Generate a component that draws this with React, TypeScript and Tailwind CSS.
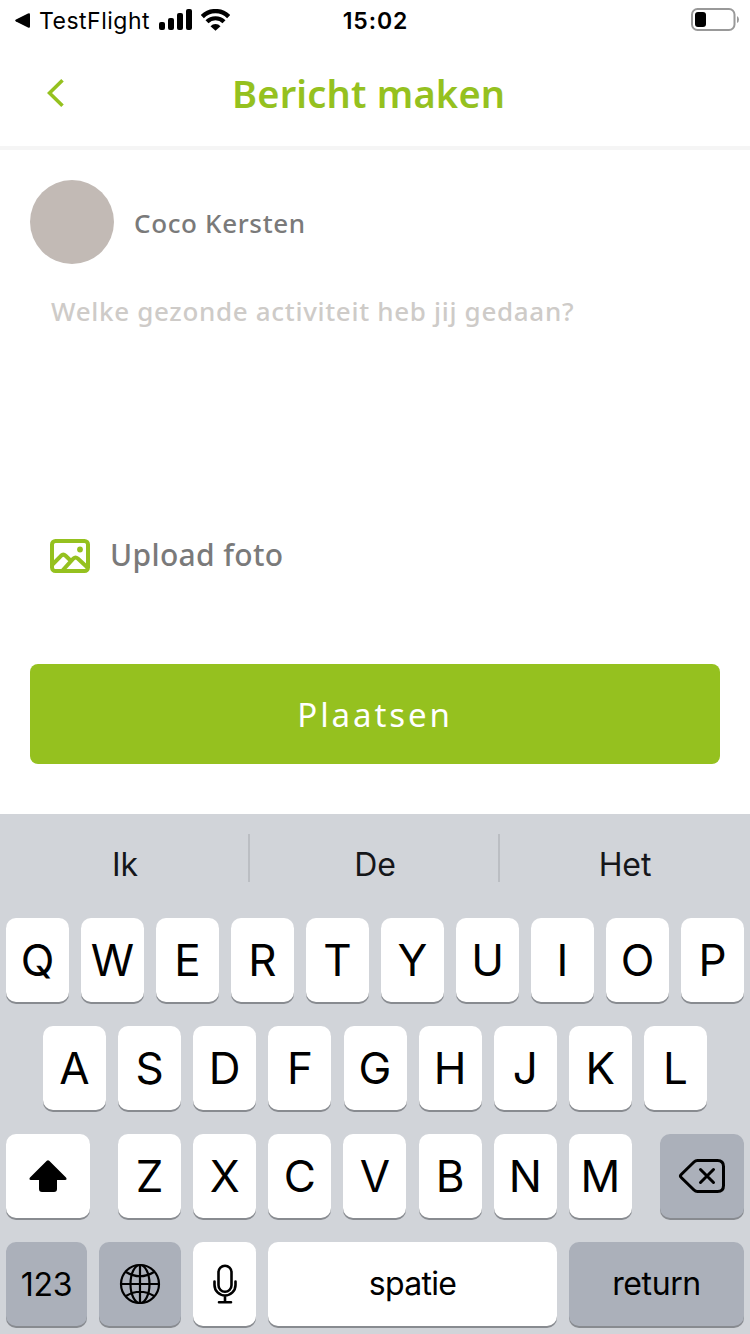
import clsx from 'clsx';
import React from 'react';

const SUGGESTIONS = ['Ik', 'De', 'Het'];
const TOP_ROW = ['Q', 'W', 'E', 'R', 'T', 'Y', 'U', 'I', 'O', 'P'];
const MIDDLE_ROW = ['A', 'S', 'D', 'F', 'G', 'H', 'J', 'K', 'L'];
const BOTTOM_ROW = ['Z', 'X', 'C', 'V', 'B', 'N', 'M'];

const StatusBar: React.FC = () => (
  <div className="flex h-10 items-center pl-[15px] pr-[11px] font-['Inter',sans-serif] text-black">
    <div className="flex flex-1 items-center">
      <svg width="15" height="15" viewBox="0 0 15 15">
        <path d="M1 6.4 13 .5q2-.8 2 1v12q0 1.800-2 1L1 8.600Q-.6 7.500 1 6.400Z" />
      </svg>
      <span className="ml-[9px] w-[111px] whitespace-nowrap pt-0.5 text-[23px] leading-10 tracking-[0.5px]">
        TestFlight
      </span>
      <svg className="-mt-px ml-[9px]" width="33" height="21" viewBox="0 0 33 21">
        <rect x="0" y="13" width="6" height="8" rx="2" />
        <rect x="9" y="9" width="6" height="12" rx="2" />
        <rect x="18" y="4" width="6" height="17" rx="2" />
        <rect x="27" y="0" width="6" height="21" rx="2" />
      </svg>
      <svg className="ml-[9px]" width="29" height="22" viewBox="0 0 29 22">
        <path d="M1.300 7.600a18.600 18.600 0 0 1 26.400 0" fill="none" stroke="#000" strokeWidth="4.400" />
        <path d="M6 12.800a12 12 0 0 1 17 0" fill="none" stroke="#000" strokeWidth="4.200" />
        <path d="M14.500 21.800 9.500 17.200a6.800 6.800 0 0 1 10 0Z" />
      </svg>
    </div>
    <span className="pr-[3px] pt-0.5 text-[23px] font-semibold leading-10 tracking-[0.9px]">15:02</span>
    <div className="flex flex-1 justify-end">
      <svg className="-mt-px" width="48" height="23" viewBox="0 0 48 23">
        <rect x="1" y="1" width="42.500" height="21" rx="5.500" fill="none" stroke="#999" strokeWidth="2" />
        <rect x="4" y="4" width="11" height="15" rx="3" />
        <path d="M46 8v7q2-1 2-3.500T46 8Z" fill="#999" />
      </svg>
    </div>
  </div>
);

const Header: React.FC = () => (
  <header className="flex h-[110px] items-center border-b-4 border-[#f5f5f5] pl-[47px] text-[#95c11f]">
    <button aria-label="Terug">
      <svg width="17" height="28" viewBox="0 0 17 28" fill="none" stroke="currentColor" strokeWidth="3.600">
        <path d="M15.500 1.300 2.500 14l13 12.700" />
      </svg>
    </button>
    <h1 className="ml-[168px] whitespace-nowrap text-[38px] font-semibold leading-none tracking-[0.2px]">
      Bericht maken
    </h1>
  </header>
);

const MessageForm: React.FC = () => (
  <main className="flex h-[664px] flex-col px-[30px] pt-[30px]">
    <div className="flex items-center gap-5">
      <div className="size-[84px] rounded-full bg-[#c2bab5]" />
      <span className="pt-px text-[26px] font-medium leading-none tracking-[0.650px] text-[#7a7a7a]">
        Coco Kersten
      </span>
    </div>
    <p className="h-[240px] whitespace-nowrap pl-[21px] pt-[33px] text-[26px] font-medium leading-7 tracking-[0.680px] text-[#cecbc8]">
      Welke gezonde activiteit heb jij gedaan?
    </p>
    <div className="flex h-[102px] items-center gap-5 pl-5">
      <svg
        className="mt-px"
        width="40"
        height="34"
        viewBox="0 0 40 34"
        fill="none"
        stroke="#95c11f"
        strokeWidth="4"
      >
        <rect x="2" y="2" width="36" height="30" rx="3.500" />
        <path d="m2.500 25.500 8.500-8.700q2.300-2.200 4.600 0l4.400 4.200M12.500 31.500l11-12q2-2 4.300 0L38 29" />
        <circle cx="30" cy="10.500" r="2.900" fill="#95c11f" stroke="none" />
      </svg>
      <span className="text-[30px] font-medium leading-none tracking-[0.350px] text-[#7a7a7a]">Upload foto</span>
    </div>
    <button className="mt-[58px] h-[100px] rounded-lg bg-[#95c11f] pt-0.5 text-[33px] tracking-[2.900px] text-white">
      Plaatsen
    </button>
  </main>
);

const Key: React.FC<{
  children: React.ReactNode;
  className?: string;
  dark?: boolean;
}> = ({ children, className = 'w-[63px] text-[44px]', dark = false }) => (
  <button
    className={clsx(
      'flex h-[84px] shrink-0 items-center justify-center rounded-[10px] leading-none shadow-[0_2px_0_#888b90]',
      dark ? 'bg-[#abb0ba]' : 'bg-white',
      className
    )}
  >
    {children}
  </button>
);

const Keyboard: React.FC = () => (
  <section className="h-[520px] bg-[#d1d4d9] font-['Inter',sans-serif] text-black">
    <div className="flex h-[104px] pt-5">
      {SUGGESTIONS.map((word, i) => (
        <div
          key={word}
          className={clsx(
            'flex h-12 items-center justify-center pt-3.5 text-[32px] leading-none tracking-[-0.1px] text-[#15161a]',
            i < 2 ? 'w-[250px] border-r-2 border-[#bbbec3] pl-0.5' : 'flex-1'
          )}
        >
          {word}
        </div>
      ))}
    </div>
    <div className="flex flex-col gap-6 px-1.5">
      <div className="flex justify-between">
        {TOP_ROW.map((letter) => (
          <Key key={letter}>{letter}</Key>
        ))}
      </div>
      <div className="flex justify-between px-[37px]">
        {MIDDLE_ROW.map((letter) => (
          <Key key={letter}>{letter}</Key>
        ))}
      </div>
      <div className="flex justify-between">
        <Key className="w-[84px]">
          <svg width="38" height="32" viewBox="0 0 38 32">
            <path d="M17.800.8q1.200-1 2.400 0L37 17.500q1.500 2.500-1 2.500h-8v9q0 3-3 3h-12q-3 0-3-3v-9H2q-2.500 0-1-2.500Z" />
          </svg>
        </Key>
        <div className="flex w-[514px] justify-between">
          {BOTTOM_ROW.map((letter) => (
            <Key key={letter}>{letter}</Key>
          ))}
        </div>
        <Key dark className="w-[84px]">
          <svg
            width="48"
            height="34"
            viewBox="0 0 48 34"
            fill="none"
            stroke="#000"
            strokeWidth="3"
            strokeLinecap="round"
            strokeLinejoin="round"
          >
            <path d="M19.500 1.500h20q6 0 6 6v19q0 6-6 6h-20q-2 0-3.500-1.500L3.200 18.500q-1.500-1.500 0-3L16 3Q17.500 1.500 19.500 1.500Z" />
            <path d="m22.500 10.500 13 13M35.500 10.500l-13 13" />
          </svg>
        </Key>
      </div>
      <div className="flex gap-3">
        <Key dark className="w-[81px] pt-0.5 text-[32px] tracking-[-0.2px]">
          123
        </Key>
        <Key dark className="w-[82px]">
          <svg width="42" height="42" viewBox="0 0 42 42" fill="none" stroke="#000" strokeWidth="2.200">
            <circle cx="21" cy="21" r="19" />
            <ellipse cx="21" cy="21" rx="9.500" ry="19" />
            <path d="M21 2v38M2 21h38M7 9q14 8.500 28 0M7 33q14-8.500 28 0" />
          </svg>
        </Key>
        <Key className="w-[63px]">
          <svg width="24" height="40" viewBox="0 0 24 40" fill="none" stroke="#000" strokeWidth="2.600" strokeLinecap="round">
            <rect x="5.500" y="1.800" width="13" height="26" rx="6.500" />
            <path d="M1.500 17.500V21a10.500 10.500 0 0 0 21 0v-3.500M12 31.500V38M6 38.300h12" />
          </svg>
        </Key>
        <Key className="w-[289px] text-[32px] tracking-[-0.700px]">spatie</Key>
        <Key dark className="w-[175px] text-[32px] tracking-[-0.4px]">
          return
        </Key>
      </div>
    </div>
  </section>
);

export default function App() {
  return (
    <div className="h-[1334px] w-[750px] overflow-hidden bg-white font-['Noto_Sans',sans-serif]">
      <StatusBar />
      <Header />
      <MessageForm />
      <Keyboard />
    </div>
  );
}
